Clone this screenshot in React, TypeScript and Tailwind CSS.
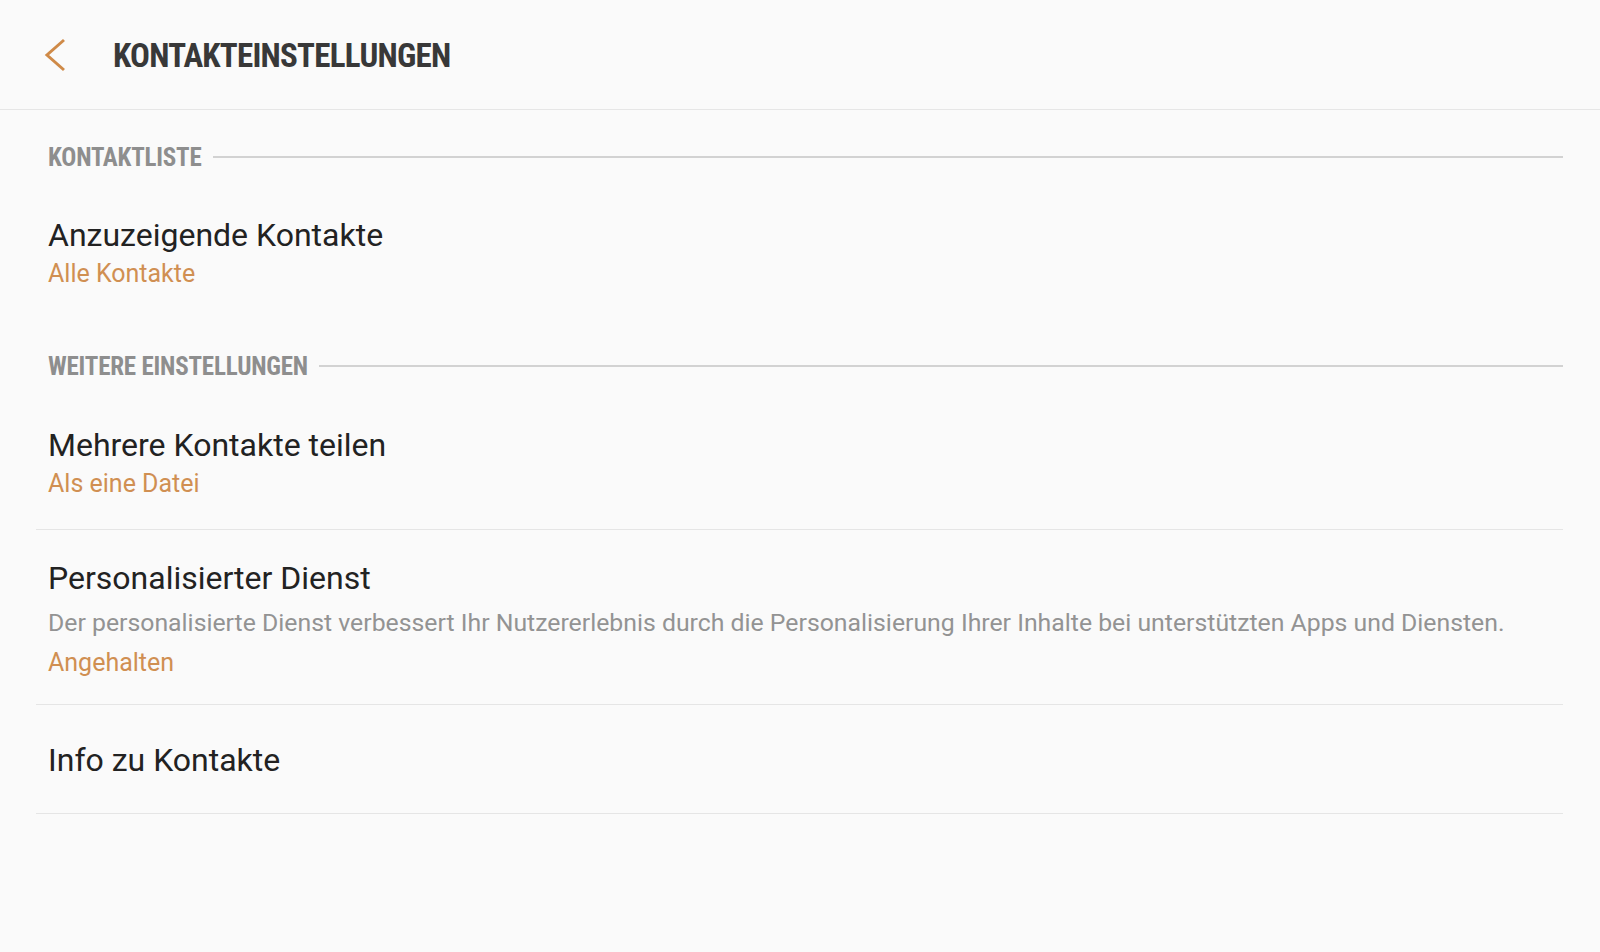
const ORANGE = 'text-[#d08f52]';

function SectionHeader({ label, className }: { label: string; className?: string }) {
  return (
    <div className={`flex h-[30px] items-center gap-[11px] pl-[12px] ${className ?? ''}`}>
      <span className="font-['Roboto_Condensed','Roboto',sans-serif] text-[25px] font-bold leading-none tracking-[-0.2px] text-[#8e8e8e]">
        {label}
      </span>
      <div className="h-[2px] flex-1 bg-[#d2d2d2]" />
    </div>
  );
}

function Item({
  title,
  description,
  value,
  divider,
  className,
}: {
  title: string;
  description?: string;
  value?: string;
  divider?: boolean;
  className?: string;
}) {
  return (
    <div className={`${divider ? 'border-b border-[#e5e5e5]' : ''} px-[12px] ${className ?? ''}`}>
      <div className="text-[32px] leading-[40px] text-[#222222]">{title}</div>
      {description && (
        <div className="mt-[8px] text-[24.8px] leading-[34px] text-[#939393]">{description}</div>
      )}
      {value && (
        <div className={`${description ? 'mt-[8px]' : 'mt-[4px]'} text-[25px] leading-[30px] ${ORANGE}`}>
          {value}
        </div>
      )}
    </div>
  );
}

export default function App() {
  return (
    <div className="min-h-[952px] w-full bg-[#fafafa] font-['Roboto',sans-serif]">
      <header className="flex h-[110px] items-center border-b border-[#e6e6e6] pl-[44px]">
        <svg width="22" height="34" viewBox="0 0 22 34" className="mt-[1px]">
          <path d="M20 2 L3 17 L20 32" fill="none" stroke="#cf8a48" strokeWidth="3" />
        </svg>
        <h1 className="ml-[47px] mt-[3px] font-['Roboto_Condensed','Roboto',sans-serif] text-[33px] font-bold tracking-[-0.75px] text-[#383838]">
          KONTAKTEINSTELLUNGEN
        </h1>
      </header>

      <main className="ml-[36px] mr-[37px]">
        <SectionHeader label="KONTAKTLISTE" className="mt-[32px]" />
        <Item title="Anzuzeigende Kontakte" value="Alle Kontakte" className="pt-[43px] pb-[30px]" />

        <SectionHeader label="WEITERE EINSTELLUNGEN" className="mt-[32px]" />
        <Item
          title="Mehrere Kontakte teilen"
          value="Als eine Datei"
          divider
          className="pt-[44px] pb-[30px]"
        />
        <Item
          title="Personalisierter Dienst"
          description="Der personalisierte Dienst verbessert Ihr Nutzererlebnis durch die Personalisierung Ihrer Inhalte bei unterstützten Apps und Diensten."
          value="Angehalten"
          divider
          className="pt-[28px] pb-[26px]"
        />
        <Item title="Info zu Kontakte" divider className="pt-[35px] pb-[33px]" />
      </main>
    </div>
  );
}
